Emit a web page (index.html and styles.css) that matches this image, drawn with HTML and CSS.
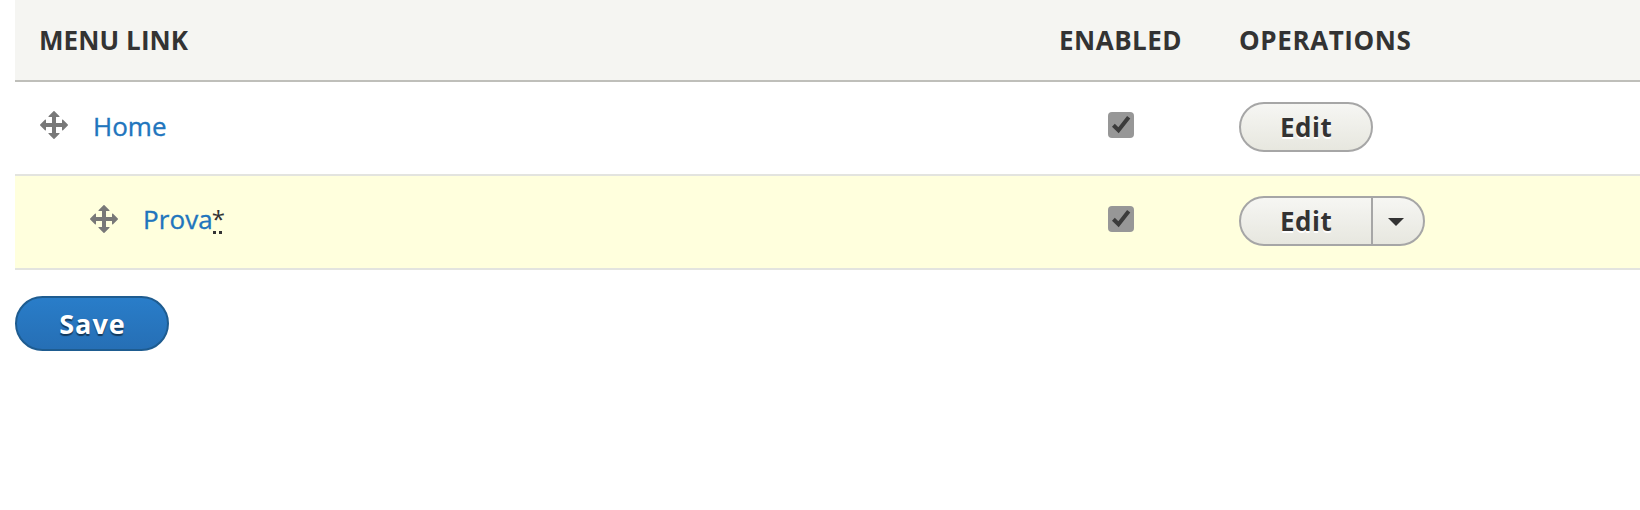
FILE: index.html
```html
<!DOCTYPE html>
<html lang="en">
<head>
<meta charset="utf-8">
<title>Menu links</title>
<link rel="stylesheet" href="styles.css">
</head>
<body>
<svg class="defs" width="0" height="0" aria-hidden="true">
  <symbol id="move" viewBox="0 0 16 16"><path d="M14.904 7.753l-2.373-2.372c-.291-.292-.529-.193-.529.22v1.399h-3v-3h1.4c.413 0 .512-.239.22-.53l-2.372-2.372c-.139-.136-.364-.136-.502 0l-2.371 2.372c-.292.292-.193.53.22.53h1.4v3h-3v-1.369c0-.413-.239-.511-.53-.22l-2.372 2.342c-.136.138-.136.362 0 .5l2.373 2.371c.291.292.529.193.529-.219v-1.405h3v3h-1.4c-.413 0-.511.238-.22.529l2.374 2.373c.137.137.363.137.495 0l2.377-2.373c.29-.292.19-.529-.22-.529h-1.4v-3h3v1.4c0 .412.238.511.529.219l2.373-2.371c.137-.137.137-.359 0-.495z" fill="#787878"/></symbol>
  <symbol id="check" viewBox="0 0 26 26"><path d="M5.4 13.2L10.5 18.2L20.7 5.2" fill="none" stroke="#3b3b3b" stroke-width="4"/></symbol>
</svg>
<main class="form">
  <div class="table">
    <div class="row head">
      <div class="cell th-menu">Menu link</div>
      <div class="cell th-enabled">Enabled</div>
      <div class="cell th-ops">Operations</div>
    </div>
    <div class="row">
      <div class="cell link-cell">
        <svg class="handle"><use href="#move"/></svg>
        <a class="link">Home</a>
      </div>
      <div class="cell check-cell"><span class="checkbox"><svg><use href="#check"/></svg></span></div>
      <div class="cell"><div class="dropbutton"><a class="edit">Edit</a></div></div>
    </div>
    <div class="row changed">
      <div class="cell link-cell indented">
        <svg class="handle"><use href="#move"/></svg>
        <a class="link">Prova</a><abbr class="mark">*</abbr>
      </div>
      <div class="cell check-cell"><span class="checkbox"><svg><use href="#check"/></svg></span></div>
      <div class="cell"><div class="dropbutton multiple"><a class="edit">Edit</a><span class="toggle"><i class="arrow"></i></span></div></div>
    </div>
  </div>
  <button class="save">Save</button>
</main>
</body>
</html>
```
FILE: styles.css
```css
* { box-sizing: border-box; }
body {
  margin: 0;
  background: #fff;
  color: #333;
  font: 26px/36px "Open Sans", "Noto Sans", sans-serif;
  overflow: hidden;
}
.defs { display: block; }
.form { padding-left: 15px; }
.row {
  display: grid;
  grid-template-columns: 1020px 179px 1fr;
  height: 94px;
  padding-bottom: 2px;
  border-bottom: 2px solid #e3e4df;
  align-items: center;
}
.cell { padding-left: 25px; }
.head {
  height: 82px;
  padding-bottom: 0;
  background: #f5f5f2;
  border-bottom-color: #bfbfba;
  text-transform: uppercase;
  font-weight: 700;
  white-space: nowrap;
}
.th-menu { padding-left: 24px; letter-spacing: .1px; }
.th-enabled { padding-left: 24px; letter-spacing: .5px; }
.th-ops { letter-spacing: .6px; }
.changed { background: #ffffdd; }
.link-cell {
  display: flex;
  align-items: center;
  padding-left: 23px;
}
.indented { padding-left: 73px; }
.handle { width: 32px; height: 32px; margin: -4px 23px 0 0; }
.link {
  padding-bottom: 2px;
  color: #2175bd;
  font-weight: 500;
  -webkit-text-stroke: .35px #2175bd;
}
.indented .link { padding-bottom: 4px; letter-spacing: .1px; }
.mark { position: relative; margin-left: -1px; padding-bottom: 4px; font-size: 24px; }
.mark::after {
  content: "";
  position: absolute;
  left: 1px;
  bottom: 7px;
  width: 9px;
  height: 3px;
  background: linear-gradient(90deg, #333 3px, transparent 3px 6px, #333 6px);
}
.check-cell { padding-left: 73px; }
.checkbox {
  display: block;
  width: 26px;
  height: 26px;
  margin-top: -4px;
  border-radius: 4px;
  background: #979797;
}
.checkbox svg { display: block; width: 26px; height: 26px; }
.dropbutton {
  display: flex;
  width: 134px;
  height: 50px;
  border: 2px solid #a6a6a6;
  border-radius: 25px;
  background: linear-gradient(#f6f6f3, #e7e7df);
  text-shadow: 0 2px #fff;
  font-weight: 700;
  letter-spacing: .5px;
  overflow: hidden;
}
.edit { flex: none; width: 130px; padding-left: 39px; line-height: 46px; }
.toggle {
  display: flex;
  flex: 1;
  padding-top: 2px;
  border-left: 2px solid #a6a6a6;
  align-items: center;
  justify-content: center;
}
.multiple { width: 186px; }
.arrow {
  border: 8px solid transparent;
  border-top-color: #333;
  border-bottom: 0;
  margin-right: 5px;
}
.save {
  display: block;
  width: 154px;
  height: 55px;
  margin: 26px 0 0;
  padding: 0 0 0 1px;
  border: 2px solid #1e5c90;
  border-radius: 28px;
  background: linear-gradient(#297dc9, #266fb5);
  color: #fff;
  font: 700 27px/50px "Open Sans", "Noto Sans", sans-serif;
  letter-spacing: 1px;
  text-shadow: 0 2px 1px rgba(0, 0, 0, .5);
}
```
